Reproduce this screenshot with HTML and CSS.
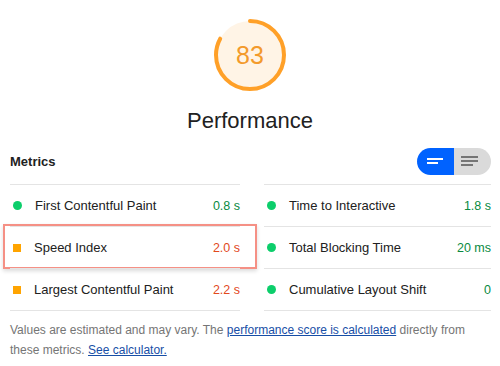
FILE: index.html
```html
<!DOCTYPE html>
<html lang="en">
<head>
  <meta charset="UTF-8">
  <meta name="viewport" content="width=device-width, initial-scale=1.0">
  <title>Performance</title>
  <link rel="stylesheet" href="styles.css">
</head>
<body>
  <div class="gauge-wrap">
    <svg class="gauge" width="76" height="76" viewBox="0 0 76 76">
      <circle class="gauge-base" cx="38" cy="38" r="34"></circle>
      <circle class="gauge-arc" cx="38" cy="38" r="34" transform="rotate(-90 38 38)"></circle>
    </svg>
    <div class="gauge-value">83</div>
  </div>
  <h1 class="category-title">Performance</h1>

  <div class="metrics-header">
    <span class="metrics-title">Metrics</span>
    <div class="toggle">
      <button class="toggle-btn active">
        <svg width="18" height="8" viewBox="0 0 18 8"><rect x="0" y="0" width="16" height="2" fill="#fff"/><rect x="0" y="4" width="11" height="2" fill="#fff"/></svg>
      </button>
      <button class="toggle-btn">
        <svg width="18" height="11" viewBox="0 0 18 11"><rect x="0" y="0" width="17" height="2" fill="#757575"/><rect x="0" y="4" width="17" height="2" fill="#757575"/><rect x="0" y="8" width="12" height="2" fill="#757575"/></svg>
      </button>
    </div>
  </div>

  <div class="metrics">
    <div class="metric pass">
      <span class="metric-icon"></span>
      <span class="metric-name">First Contentful Paint</span>
      <span class="metric-value">0.8 s</span>
    </div>
    <div class="metric pass">
      <span class="metric-icon"></span>
      <span class="metric-name">Time to Interactive</span>
      <span class="metric-value">1.8 s</span>
    </div>
    <div class="metric average highlighted">
      <span class="metric-icon"></span>
      <span class="metric-name">Speed Index</span>
      <span class="metric-value">2.0 s</span>
    </div>
    <div class="metric pass">
      <span class="metric-icon"></span>
      <span class="metric-name">Total Blocking Time</span>
      <span class="metric-value">20 ms</span>
    </div>
    <div class="metric average">
      <span class="metric-icon"></span>
      <span class="metric-name">Largest Contentful Paint</span>
      <span class="metric-value">2.2 s</span>
    </div>
    <div class="metric pass">
      <span class="metric-icon"></span>
      <span class="metric-name">Cumulative Layout Shift</span>
      <span class="metric-value">0</span>
    </div>
  </div>

  <p class="footnote">Values are estimated and may vary. The <a href="#">performance score is calculated</a> directly from these metrics. <a href="#">See calculator.</a></p>
</body>
</html>
```

FILE: styles.css
```css
body {
  font-family: "Liberation Sans", Arial, sans-serif;
  margin: 0;
  width: 500px;
  color: #212121;
  background: #fff;
}
.gauge-wrap {
  position: relative;
  width: 76px;
  height: 76px;
  margin: 17px auto 0;
}
.gauge {
  display: block;
}
.gauge-base {
  fill: #fff4e6;
  stroke: none;
}
.gauge-arc {
  fill: none;
  stroke: #ffa028;
  stroke-width: 4;
  stroke-linecap: round;
  stroke-dasharray: 177 214;
}
.gauge-value {
  position: absolute;
  top: 0;
  left: 0;
  right: 0;
  line-height: 76px;
  text-align: center;
  font-size: 25px;
  color: #f39a2b;
}
.category-title {
  margin: 15px 0 0;
  text-align: center;
  font-size: 22px;
  font-weight: normal;
  line-height: 26px;
  color: #212121;
}
.metrics-header {
  display: flex;
  align-items: center;
  justify-content: space-between;
  margin: 14px 9px 0 10px;
}
.metrics-title {
  font-size: 13px;
  font-weight: bold;
}
.toggle {
  display: flex;
  width: 74px;
  height: 27px;
  border-radius: 14px;
  overflow: hidden;
}
.toggle-btn {
  flex: 1;
  border: none;
  padding: 0;
  margin: 0;
  background-color: #dadada;
  display: flex;
  align-items: center;
  justify-content: center;
}
.toggle-btn.active {
  background-color: #0062ff;
}
.toggle-btn.active svg {
  margin-left: 6px;
}
.toggle-btn svg {
  display: block;
  margin-right: 6px;
}
.metrics {
  display: grid;
  grid-template-columns: 230px 227px;
  column-gap: 24px;
  margin: 9px 9px 0 10px;
}
.metric {
  position: relative;
  display: flex;
  align-items: center;
  height: 41px;
  border-top: 1px solid #e4e4e4;
  font-size: 13px;
}
.metric:nth-last-child(-n+2) {
  border-bottom: 1px solid #e4e4e4;
}
.metric-icon {
  width: 8px;
  height: 8px;
  margin: 0 13px 0 3px;
  flex: none;
}
.metric.pass .metric-icon {
  background-color: #0cce6b;
  border-radius: 50%;
  width: 9px;
  height: 9px;
}
.metric.average .metric-icon {
  background-color: #ffa400;
}
.metric-name {
  flex: 1;
  color: #212121;
}
.metric-value {
  font-size: 12.5px;
}
.metric.pass .metric-value {
  color: #0a8a3f;
}
.metric.average .metric-value {
  color: #e2491d;
}
.metric.highlighted::after {
  content: "";
  position: absolute;
  top: -3px;
  bottom: -1px;
  left: -7px;
  right: -17px;
  border: 2px solid #f59085;
  box-shadow: 0 2px 4px rgba(0, 0, 0, 0.15);
}
.footnote {
  margin: 9px 9px 0 10px;
  font-size: 12px;
  line-height: 20px;
  color: #757575;
}
.footnote a {
  color: #174ea6;
}
```
